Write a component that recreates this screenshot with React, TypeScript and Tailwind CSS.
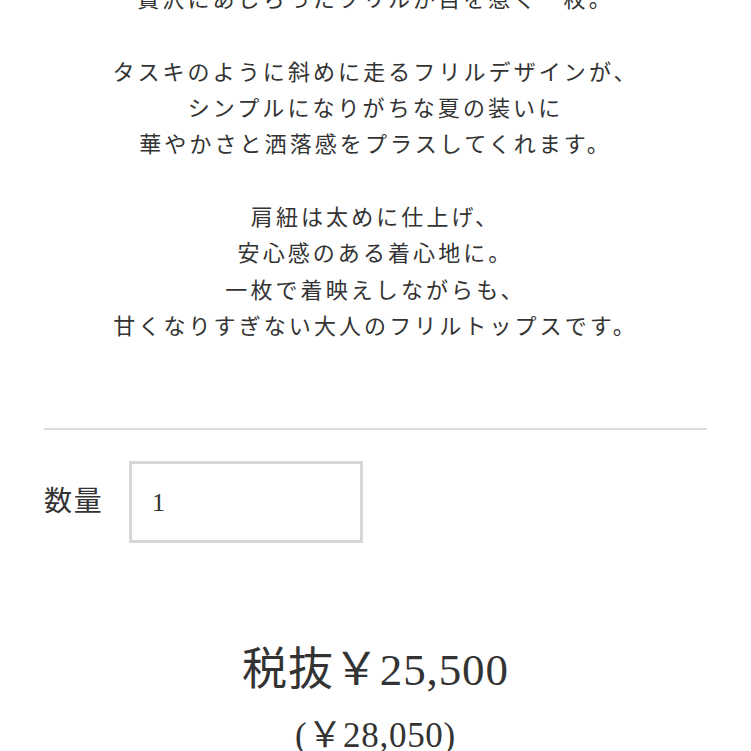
const description = [
  ["贅沢にあしらったフリルが目を惹く一枚。"],
  [
    "タスキのように斜めに走るフリルデザインが、",
    "シンプルになりがちな夏の装いに",
    "華やかさと洒落感をプラスしてくれます。",
  ],
  [
    "肩紐は太めに仕上げ、",
    "安心感のある着心地に。",
    "一枚で着映えしながらも、",
    "甘くなりすぎない大人のフリルトップスです。",
  ],
];

const serif = "font-['Liberation_Serif','Noto_Sans_CJK_JP',serif]";

export default function App() {
  return (
    <div className={`min-h-screen overflow-hidden bg-white text-[#333] ${serif}`}>
      <div className="px-[44px]">
        {/* product copy */}
        <div className="-mt-[18px] text-center text-[22px] leading-[36.33px] tracking-[0.14em]">
          {description.map((para, i) => (
            <p key={i} className={i > 0 ? "mt-[36.33px]" : ""}>
              {para.map((line) => (
                <span key={line} className="block">
                  {line}
                </span>
              ))}
            </p>
          ))}
        </div>

        <hr className="mt-[83px] border-t-2 border-[#dcdcdc]" />

        {/* quantity */}
        <div className="mt-[31px] flex items-center gap-[24px]">
          <label className="w-[61px] text-[28px] tracking-[0.06em]">数量</label>
          <div className="flex h-[82px] w-[234px] items-center border-[3px] border-[#d6d6d6] px-[20px] text-[26px]">
            1
          </div>
        </div>

        {/* price */}
        <div className="mt-[101px] text-center">
          <div className="text-[45px] leading-[52px] tracking-[0.02em]">税抜￥25,500</div>
          <div className="mt-[18px] text-[35px] leading-[44px] tracking-[0.02em]">(￥28,050)</div>
        </div>
      </div>
    </div>
  );
}
